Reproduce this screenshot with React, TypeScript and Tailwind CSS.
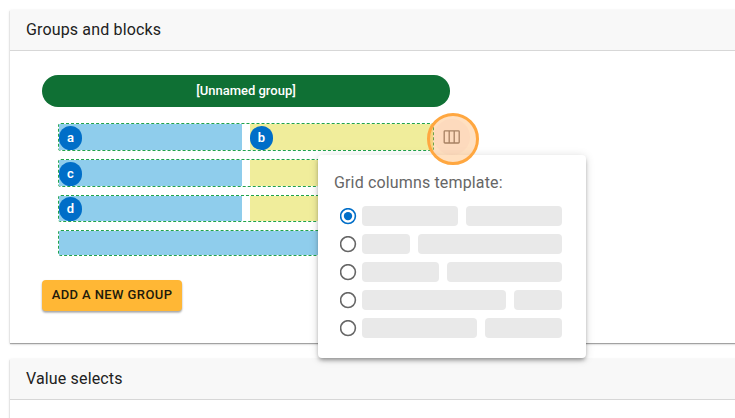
import React from "react";

function Badge({ label, className }: { label: string; className: string }) {
  return (
    <span
      className={`${className} flex h-6 w-[23px] items-center justify-center rounded-full bg-[#006ec8] pb-px text-[13px] leading-none font-semibold text-white`}
    >
      {label}
    </span>
  );
}

const rows = [
  { height: "h-7", badge: "mt-0.5", cells: ["a", "b"] },
  { height: "h-7", badge: "mt-0.5", cells: ["c", ""] },
  { height: "h-[27px]", badge: "mt-px", cells: ["d", ""] },
  { height: "h-[26px]", badge: "mt-px", cells: [""] },
];

const templates = [
  { left: "w-24", selected: true },
  { left: "w-12", selected: false },
  { left: "w-[77px]", selected: false },
  { left: "w-36", selected: false },
  { left: "w-[115px]", selected: false },
];

const panel =
  "w-[760px] bg-white shadow-[0_1px_1px_rgba(0,0,0,0.3),0_1px_3px_rgba(0,0,0,0.14)]";
const panelHeader =
  "h-[41px] border-b border-[#d7d7d7] bg-[#f8f8f8] pl-4 text-base leading-[39px] tracking-[0.15px] text-[#212121]";

function Radio({ selected }: { selected: boolean }) {
  const color = selected ? "#006ec8" : "#666666";
  return (
    <svg className="size-[17px] shrink-0" viewBox="0 0 17 17" fill="none">
      <circle cx="8" cy="8.1" r="7.4" stroke={color} strokeWidth="1.6" />
      {selected && <circle cx="8" cy="8.1" r="4.2" fill={color} />}
    </svg>
  );
}

function TemplatePopup() {
  return (
    <div className="absolute top-[155px] left-[318px] h-[203px] w-[268px] rounded bg-white px-4 pt-4 shadow-[0_3px_4px_-1px_rgba(0,0,0,0.38),0_1px_10px_rgba(0,0,0,0.14)]">
      <div className="h-6 text-base leading-[23px] tracking-[0.15px] text-[#666]">Grid columns template:</div>
      <div className="mt-[11px] flex flex-col gap-2 pr-2 pl-1.5">
        {templates.map((item) => (
          <div key={item.left} className="flex h-5 items-center">
            <Radio selected={item.selected} />
            <div className="ml-[5px] flex h-5 w-[200px] gap-2">
              <div className={`${item.left} shrink-0 rounded bg-[#e9e9e9]`} />
              <div className="flex-1 rounded bg-[#e9e9e9]" />
            </div>
          </div>
        ))}
      </div>
    </div>
  );
}

export default function App() {
  return (
    <div className="relative h-[418px] w-[735px] overflow-hidden bg-white pt-2.5 pl-2.5 font-[Roboto,sans-serif]">
      <section className={`${panel} h-[333px]`}>
        <header className={panelHeader}>Groups and blocks</header>
        <div className="pt-6 pl-8">
          <div className="h-8 w-[408px] rounded-full bg-[#0f7034] text-center text-[13px] leading-[31px] font-medium text-white">
            [Unnamed group]
          </div>
          <div className="mt-4 ml-4 flex w-[376px] flex-col gap-2">
            {rows.map((row, i) => (
              <div key={i} className={`${row.height} flex gap-2 rounded-[3px] border border-dashed border-[#20a34b]`}>
                {row.cells.map((label, j) => (
                  <div key={j} className={`flex-1 ${j === 0 ? "bg-[#8fcdec]" : "bg-[#f0ed9b]"}`}>
                    {label && <Badge label={label} className={row.badge} />}
                  </div>
                ))}
              </div>
            ))}
          </div>
          <button className="mt-6 block h-[31px] w-[140px] rounded bg-[#ffb735] pb-px text-[13px] leading-[30px] font-medium tracking-[0.4px] whitespace-nowrap text-[#211a0b] shadow-[0_2px_2px_rgba(0,0,0,0.22),0_1px_2px_rgba(0,0,0,0.18)]">
            ADD A NEW GROUP
          </button>
        </div>
      </section>
      <section className={`${panel} mt-4 h-20`}>
        <header className={panelHeader}>Value selects</header>
      </section>

      <TemplatePopup />

      <div className="absolute top-[113px] left-[427px] size-[52px] rounded-full border-[3px] border-[#ffa740] bg-[#ffa64d]/35">
        <div className="absolute top-[3px] left-1 size-9 rounded-full bg-[#f5c5ae]/20" />
        <svg className="absolute top-3.5 left-[13px]" width="17" height="14" viewBox="0 0 17 14" fill="none" stroke="#a78163" strokeWidth="1.3">
          <rect x="1.2" y="0.8" width="15" height="12.2" rx="0.8" />
          <path d="M6.2 1v12M11.2 1v12" />
        </svg>
      </div>
    </div>
  );
}
